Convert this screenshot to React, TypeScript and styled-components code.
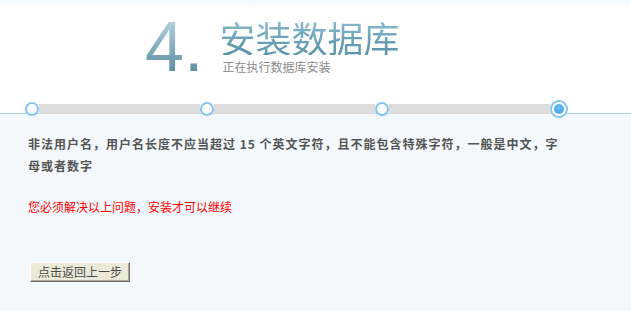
import React from "react";
import styled, { createGlobalStyle } from "styled-components";

const GlobalStyle = createGlobalStyle`
  html, body {
    margin: 0;
    padding: 0;
    background: #f2f8fc;
  }
  body {
    font-family: "Noto Sans CJK SC", "Noto Sans", sans-serif;
  }
`;

const Page = styled.div`
  width: 631px;
  min-height: 311px;
  background: #f2f8fc;
`;

const Header = styled.header`
  background: linear-gradient(#f1f8fc 0px, #ffffff 6px);
  border-bottom: 1px solid #a9d0e2;
  padding-top: 12px;
`;

const TitleRow = styled.div`
  display: flex;
  align-items: flex-start;
  padding-left: 145px;
`;

const StepNumber = styled.div`
  font-family: "Liberation Sans", Arial, sans-serif;
  font-size: 70px;
  line-height: 70px;
  height: 70px;
  background: linear-gradient(#c4dce6 0px, #b0cfdc 10px, #86adbf 35px, #5d8ea3 60px, #5a8aa0 70px);
  -webkit-background-clip: text;
  background-clip: text;
  color: transparent;
`;

const TitleCol = styled.div`
  display: flex;
  flex-direction: column;
  padding-top: 7px;
  margin-left: 16px;
`;

const Title = styled.h1`
  margin: 0;
  font-family: "Noto Sans CJK SC", sans-serif;
  font-weight: normal;
  font-size: 36px;
  line-height: 36px;
  height: 36px;
  background: linear-gradient(#8fbdd0 0px, #6ea5bb 18px, #5a93aa 36px);
  -webkit-background-clip: text;
  background-clip: text;
  color: transparent;
`;

const Subtitle = styled.div`
  margin: 6px 0 0 3px;
  font-size: 12px;
  line-height: 12px;
  color: #8a8a8a;
`;

const Steps = styled.div`
  display: flex;
  align-items: center;
  height: 10px;
  margin: 22px 0 -1px 25px;
`;

const Segment = styled.div`
  width: 161px;
  height: 10px;
  background: #dcdcdc;
`;

const Dot = styled.div<{ $current?: boolean }>`
  box-sizing: border-box;
  flex: none;
  position: relative;
  width: ${(p) => (p.$current ? 18 : 14)}px;
  height: ${(p) => (p.$current ? 18 : 14)}px;
  margin: ${(p) => (p.$current ? -4 : -2)}px 0;
  border-radius: 50%;
  border: 2px solid #82c6ef;
  background: #ffffff;
  display: flex;
  align-items: center;
  justify-content: center;
`;

const DotCore = styled.div`
  width: 10px;
  height: 10px;
  border-radius: 50%;
  background: radial-gradient(circle at 50% 35%, #6cbcf0 0%, #3f9fe4 100%);
`;

const Content = styled.main`
  padding: 19px 64px 30px 28px;
`;

const Message = styled.p`
  margin: 0;
  font-size: 12px;
  font-weight: bold;
  letter-spacing: 1px;
  line-height: 22px;
  color: #555555;
`;

const Warning = styled.p`
  margin: 19px 0 0;
  font-size: 12px;
  line-height: 22px;
  color: #ff0000;
`;

const BackButton = styled.button`
  box-sizing: border-box;
  display: block;
  width: 100px;
  height: 20px;
  margin: 44px 0 0 2px;
  padding: 0;
  font-family: "Noto Sans CJK SC", sans-serif;
  font-size: 12px;
  line-height: 16px;
  color: #4a4a4a;
  background: #ece9d8;
  border: 1px solid;
  border-color: #ffffff #716f64 #716f64 #ffffff;
  box-shadow: inset -1px -1px 0 #aca899;
  cursor: pointer;
`;

export default function App() {
  return (
    <Page>
      <GlobalStyle />
      <Header>
        <TitleRow>
          <StepNumber>4.</StepNumber>
          <TitleCol>
            <Title>安装数据库</Title>
            <Subtitle>正在执行数据库安装</Subtitle>
          </TitleCol>
        </TitleRow>
        <Steps>
          <Dot />
          <Segment />
          <Dot />
          <Segment />
          <Dot />
          <Segment />
          <Dot $current>
            <DotCore />
          </Dot>
        </Steps>
      </Header>
      <Content>
        <Message>
          非法用户名，用户名长度不应当超过 15 个英文字符，且不能包含特殊字符，一般是中文，字母或者数字
        </Message>
        <Warning>您必须解决以上问题，安装才可以继续</Warning>
        <BackButton type="button">点击返回上一步</BackButton>
      </Content>
    </Page>
  );
}
